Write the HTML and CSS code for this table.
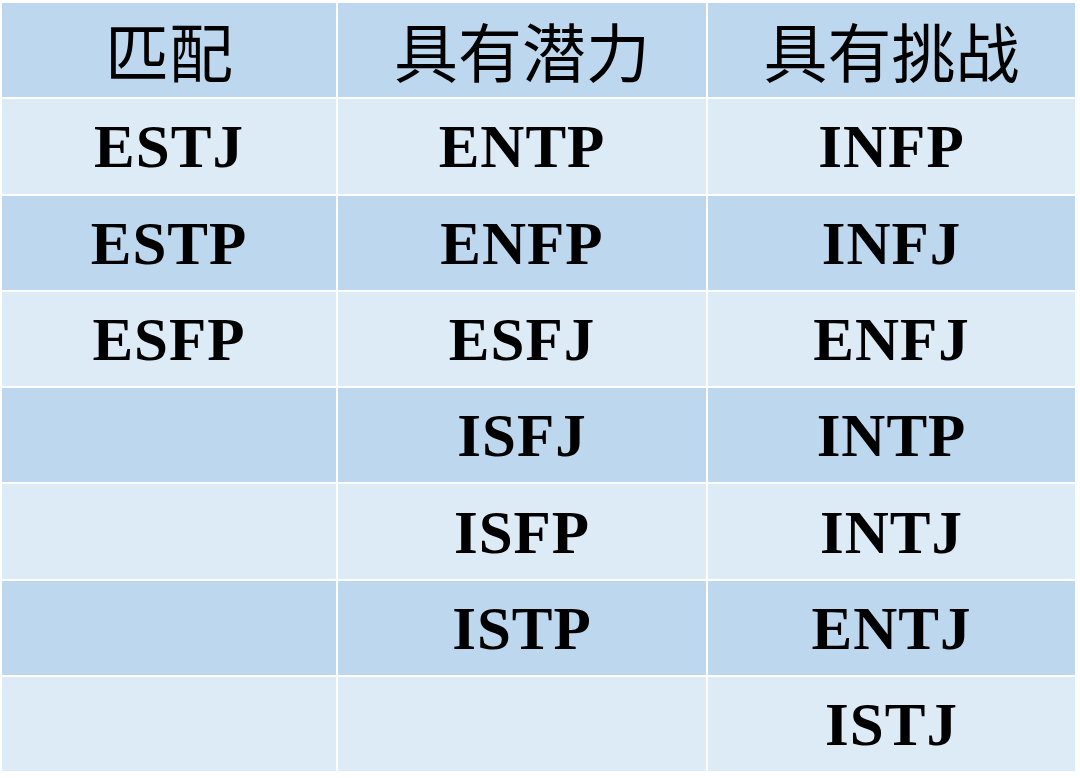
FILE: index.html
```html
<!DOCTYPE html>
<html lang="zh">
<head>
<meta charset="utf-8">
<title>MBTI</title>
<link rel="stylesheet" href="styles.css">
</head>
<body>
<div class="table">
  <div class="cell head">匹配</div><div class="cell head">具有潜力</div><div class="cell head">具有挑战</div>
  <div class="cell light">ESTJ</div><div class="cell light">ENTP</div><div class="cell light">INFP</div>
  <div class="cell dark">ESTP</div><div class="cell dark">ENFP</div><div class="cell dark">INFJ</div>
  <div class="cell light">ESFP</div><div class="cell light">ESFJ</div><div class="cell light">ENFJ</div>
  <div class="cell dark"></div><div class="cell dark">ISFJ</div><div class="cell dark">INTP</div>
  <div class="cell light"></div><div class="cell light">ISFP</div><div class="cell light">INTJ</div>
  <div class="cell dark"></div><div class="cell dark">ISTP</div><div class="cell dark">ENTJ</div>
  <div class="cell light"></div><div class="cell light"></div><div class="cell light">ISTJ</div>
</div>
</body>
</html>
```
FILE: styles.css
```css
html, body {
  margin: 0;
  padding: 0;
  background: #ffffff;
}
body {
  width: 1080px;
  height: 778px;
  overflow: hidden;
}
.table {
  display: grid;
  grid-template-columns: 334px 368px 367px;
  grid-template-rows: repeat(8, 94.3px);
  gap: 2px;
  padding: 3px 0 0 2px;
}
.cell {
  display: flex;
  align-items: center;
  justify-content: center;
  font-family: "Liberation Serif", "Noto Sans CJK SC", serif;
  font-weight: bold;
  font-size: 61px;
  color: #000;
  letter-spacing: 1px;
  padding-top: 2px;
}
.head {
  background: #bdd7ee;
  font-family: "Noto Sans CJK SC", sans-serif;
  font-weight: 400;
  font-size: 64px;
  letter-spacing: 0;
  padding-top: 0;
  padding-bottom: 2px;
}
.dark {
  background: #bdd7ee;
}
.light {
  background: #ddebf7;
}
```
